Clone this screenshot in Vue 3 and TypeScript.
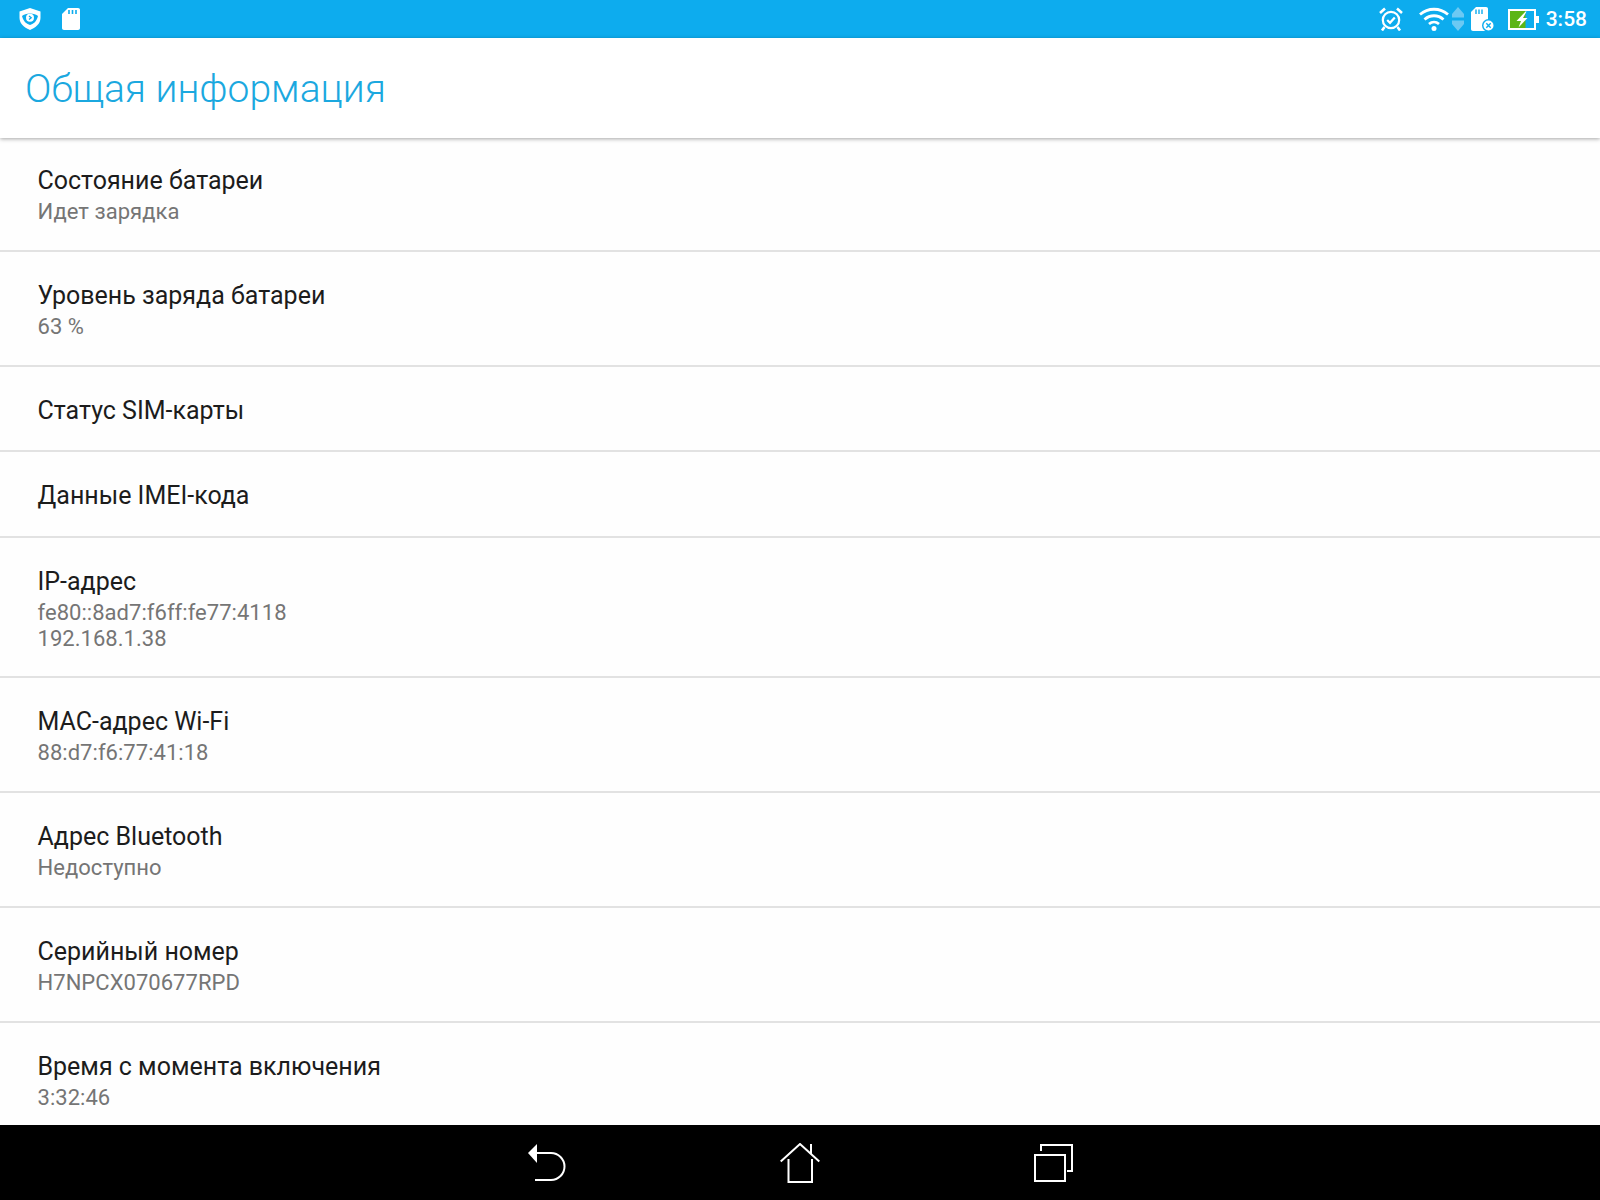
<script setup lang="ts">
interface InfoRow {
  title: string
  lines: string[]
}

const rows: InfoRow[] = [
  { title: 'Состояние батареи', lines: ['Идет зарядка'] },
  { title: 'Уровень заряда батареи', lines: ['63 %'] },
  { title: 'Статус SIM-карты', lines: [] },
  { title: 'Данные IMEI-кода', lines: [] },
  { title: 'IP-адрес', lines: ['fe80::8ad7:f6ff:fe77:4118', '192.168.1.38'] },
  { title: 'MAC-адрес Wi-Fi', lines: ['88:d7:f6:77:41:18'] },
  { title: 'Адрес Bluetooth', lines: ['Недоступно'] },
  { title: 'Серийный номер', lines: ['H7NPCX070677RPD'] },
  { title: 'Время с момента включения', lines: ['3:32:46'] },
]
</script>

<template>
  <div class="screen">
    <header class="status-bar">
      <div class="status-left">
        <!-- shield -->
        <svg width="22" height="22" viewBox="0 0 22 22">
          <path d="M11 0 L21.5 3.5 V10 C21.5 15.5 16.5 19.8 11 22 C5.5 19.8 0.5 15.5 0.5 10 V3.5 Z" fill="#fff" />
          <path d="M3 8 C6 4.5 16 4.5 19 8 C17.5 14 14 16 11 17 C8 16 4.5 14 3 8 Z" fill="#0dacee" />
          <circle cx="11" cy="9.8" r="4" fill="#fff" />
          <path d="M10 8 L12.2 9.8 L10 11.6" fill="none" stroke="#0dacee" stroke-width="1.3" />
        </svg>
        <!-- sd card -->
        <svg width="18" height="22" viewBox="0 0 18 22">
          <path d="M6 0 H16 C17.2 0 18 0.8 18 2 V20 C18 21.2 17.2 22 16 22 H2 C0.8 22 0 21.2 0 20 V6 Z" fill="#fff" />
          <path d="M7 2 V6 M10.5 2 V6 M14 2 V6" stroke="#0dacee" stroke-width="1.6" />
        </svg>
      </div>
      <div class="status-right">
        <!-- alarm -->
        <svg class="ic-alarm" width="24" height="24" viewBox="0 0 24 24" fill="none" stroke="#fff">
          <circle cx="12" cy="13" r="8.2" stroke-width="2.2" />
          <path d="M8.2 13 L11 15.8 L15.8 10.4" stroke-width="2.2" />
          <path d="M1 6 L6 1.5 M23 6 L18 1.5 M5.5 20 L3 23.5 M18.5 20 L21 23.5" stroke-width="2.6" />
        </svg>
        <!-- wifi -->
        <svg class="ic-wifi" width="30" height="24" viewBox="0 0 30 24" fill="none" stroke="#fff" stroke-width="2.8">
          <path d="M1 7.5 C9 0.5 21 0.5 29 7.5" />
          <path d="M5.5 12.5 C11 7.5 19 7.5 24.5 12.5" />
          <path d="M10 17 C13 14.5 17 14.5 20 17" />
          <circle cx="15" cy="21.5" r="2.5" fill="#fff" stroke="none" />
        </svg>
        <!-- data arrows -->
        <svg class="ic-arrows" width="12" height="24" viewBox="0 0 12 24" fill="#6cc9f3">
          <path d="M6 0 L12 7 V10.5 H0 V7 Z" />
          <path d="M0 13.5 H12 V17 L6 24 L0 17 Z" />
        </svg>
        <!-- sd card with cross -->
        <svg class="ic-sd" width="24" height="25" viewBox="0 0 24 25">
          <path d="M5 0 H15 C16.2 0 17 0.8 17 2 V22 C17 23.2 16.2 24 15 24 H2 C0.8 24 0 23.2 0 22 V5 Z" fill="#fff" />
          <path d="M5 2.5 V7 M8 2.5 V7 M11 2.5 V7" stroke="#0dacee" stroke-width="1.4" />
          <circle cx="17.5" cy="18.5" r="6.5" fill="#0dacee" />
          <circle cx="17.5" cy="18.5" r="5" fill="#fff" />
          <path d="M15.3 16.3 L19.7 20.7 M19.7 16.3 L15.3 20.7" stroke="#0dacee" stroke-width="1.4" />
        </svg>
        <!-- battery -->
        <svg class="ic-battery" width="31" height="21" viewBox="0 0 31 21">
          <rect x="1" y="1" width="26" height="19" fill="#0dacee" stroke="#fff" stroke-width="2" />
          <rect x="2" y="2" width="15.5" height="17" fill="#5cb516" />
          <rect x="28" y="7" width="3" height="7" fill="#fff" />
          <path d="M17.5 2.5 L8.5 12 H13 L10.5 18.5 L19.5 9 H15 L18.5 2.5 Z" fill="#fff" />
        </svg>
        <span class="clock">3:58</span>
      </div>
    </header>

    <div class="action-bar">
      <h1 class="page-title">Общая информация</h1>
    </div>

    <main class="list">
      <div
        v-for="row in rows"
        :key="row.title"
        :class="['row', { 'row-single': row.lines.length === 0 }]"
      >
        <div class="row-title">{{ row.title }}</div>
        <div v-for="line in row.lines" :key="line" class="row-sub">{{ line }}</div>
      </div>
    </main>

    <footer class="nav-bar">
      <!-- back -->
      <svg width="38" height="38" viewBox="0 0 38 38" fill="none" stroke="#fff" stroke-width="2">
        <path d="M0 9 L9 0 V19 Z" fill="#fff" stroke="none" />
        <path d="M8 9 H23 A13.5 13.5 0 0 1 23 36 H7" />
      </svg>
      <!-- home -->
      <svg width="40" height="40" viewBox="0 0 40 40" fill="none" stroke="#fff" stroke-width="2">
        <path d="M0.7 18.5 L20 1 L39.3 18.5" />
        <path d="M31 1 V11" />
        <path d="M8.5 16 V39 H32 V16" />
      </svg>
      <!-- recents -->
      <svg width="39" height="38" viewBox="0 0 39 38" fill="none" stroke="#fff" stroke-width="2">
        <rect x="1" y="11" width="30" height="26" />
        <path d="M7 7 V1 H38 V27 H33" />
      </svg>
    </footer>
  </div>
</template>

<style>
html,
body {
  margin: 0;
  background: #fff;
}
</style>

<style scoped>
.screen {
  width: 1600px;
  height: 1200px;
  display: flex;
  flex-direction: column;
  overflow: hidden;
  background: #fefefe;
  font-family: Roboto, "Liberation Sans", sans-serif;
}

.status-bar {
  height: 38px;
  flex-shrink: 0;
  display: flex;
  align-items: center;
  justify-content: space-between;
  padding: 0 13px 0 19px;
  background: #0dacee;
}

.status-left,
.status-right {
  display: flex;
  align-items: center;
}

.status-left {
  gap: 21px;
}

.ic-alarm {
  margin-right: 16px;
}

.ic-wifi {
  margin-right: 3px;
}

.ic-arrows {
  margin-right: 7px;
}

.ic-sd {
  margin-right: 13px;
}

.ic-battery {
  margin-right: 7px;
}

.clock {
  color: #fff;
  font-size: 21px;
  font-weight: 500;
  line-height: 1;
}

.action-bar {
  height: 100px;
  box-sizing: border-box;
  flex-shrink: 0;
  display: flex;
  align-items: center;
  padding: 2px 0 0 25px;
  background: #fff;
  box-shadow: 0 1px 4px rgba(0, 0, 0, 0.35);
  position: relative;
  z-index: 1;
}

.page-title {
  margin: 0;
  color: #1ba8df;
  font-size: 39px;
  font-weight: 300;
}

.list {
  flex: 1;
  min-height: 0;
  overflow: hidden;
}

.row {
  padding: 27px 37.5px 25.75px;
  border-bottom: 2px solid #e2e2e2;
}

.row:first-child {
  padding-top: 26px;
}

.row:last-child {
  border-bottom: none;
}

.row-single {
  padding: 27px 37.5px 22.5px;
}

.row-title {
  color: #1c1c1c;
  font-size: 25px;
  line-height: 34px;
}

.row-sub {
  color: #757575;
  font-size: 22px;
  line-height: 25px;
  letter-spacing: 0.04px;
}

.row-title + .row-sub {
  margin-top: 1px;
}

.row-sub + .row-sub {
  margin-top: 1px;
}

.nav-bar {
  height: 75px;
  flex-shrink: 0;
  display: flex;
  align-items: center;
  justify-content: center;
  gap: 214px;
  background: #000;
}
</style>
